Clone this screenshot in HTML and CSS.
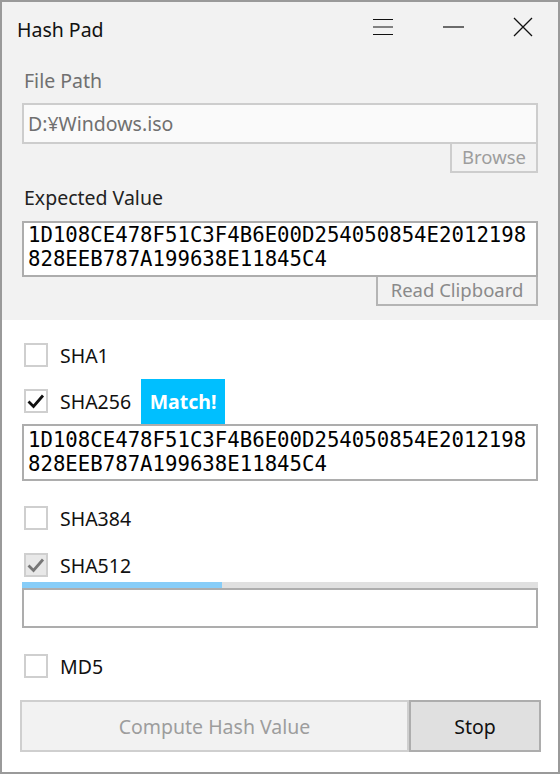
FILE: index.html
```html
<!DOCTYPE html>
<html>
<head>
<meta charset="utf-8">
<link rel="stylesheet" href="styles.css">
</head>
<body>
<div class="window">
  <header class="titlebar">
    <div class="title">Hash Pad</div>
    <div class="caption-buttons">
      <div class="cap-btn">
        <svg width="20" height="18" viewBox="0 0 20 18"><path d="M0 1.5H20M0 9H20M0 16.5H20" stroke="#111" stroke-width="1.2" fill="none"/></svg>
      </div>
      <div class="cap-btn">
        <svg width="21" height="4" viewBox="0 0 21 4"><path d="M0 2H21" stroke="#111" stroke-width="1.2" fill="none"/></svg>
      </div>
      <div class="cap-btn">
        <svg width="20" height="20" viewBox="0 0 20 20"><path d="M1 1L19 19M19 1L1 19" stroke="#111" stroke-width="1.3" fill="none"/></svg>
      </div>
    </div>
  </header>
  <section class="source">
    <div class="label muted">File Path</div>
    <div class="textbox path">D:¥Windows.iso</div>
    <div class="btn-row"><div class="small-btn browse">Browse</div></div>
    <div class="label second">Expected Value</div>
    <div class="textbox mono expected">1D108CE478F51C3F4B6E00D254050854E2012198<br>828EEB787A199638E11845C4</div>
    <div class="btn-row"><div class="small-btn clip">Read Clipboard</div></div>
  </section>
  <section class="results">
    <div class="check-row r-sha1"><span class="box"></span><span class="cb-label">SHA1</span></div>
    <div class="check-row r-sha256"><span class="box">
      <svg width="20" height="20" viewBox="0 0 20 20"><path d="M2.5 10.5L7.5 15.5L17 4.5" stroke="#111" stroke-width="2.8" fill="none"/></svg>
    </span><span class="cb-label">SHA256</span><span class="badge">Match!</span></div>
    <div class="textbox mono result">1D108CE478F51C3F4B6E00D254050854E2012198<br>828EEB787A199638E11845C4</div>
    <div class="check-row r-sha384"><span class="box"></span><span class="cb-label">SHA384</span></div>
    <div class="check-row r-sha512"><span class="box disabled">
      <svg width="20" height="20" viewBox="0 0 20 20"><path d="M2.5 10.5L7.5 15.5L17 4.5" stroke="#777" stroke-width="2.8" fill="none"/></svg>
    </span><span class="cb-label">SHA512</span></div>
    <div class="progress"><div class="fill" style="width:38.8%"></div></div>
    <div class="textbox empty"></div>
    <div class="check-row r-md5"><span class="box"></span><span class="cb-label">MD5</span></div>
    <div class="actions">
      <div class="action compute">Compute Hash Value</div>
      <div class="action stop">Stop</div>
    </div>
  </section>
</div>
</body>
</html>
```

FILE: styles.css
```css
html, body {
  margin: 0;
  padding: 0;
  background: #fff;
}
.window {
  width: 560px;
  height: 774px;
  box-sizing: border-box;
  border: 2px solid #9a9a9a;
  font-family: "Noto Sans", "Open Sans", sans-serif;
  font-size: 19.5px;
  color: #1a1a1a;
  display: flex;
  flex-direction: column;
  background: #fff;
}
.titlebar {
  height: 50px;
  display: flex;
  align-items: center;
  justify-content: space-between;
  background: #f2f2f2;
}
.title {
  padding-left: 15px;
  font-size: 19.5px;
  color: #111;
  margin-top: 4px;
}
.caption-buttons {
  display: flex;
  height: 100%;
}
.cap-btn {
  width: 70px;
  display: flex;
  align-items: center;
  justify-content: center;
}
.source {
  background: #f2f2f2;
  padding: 16px 20px 14px 20px;
  display: flex;
  flex-direction: column;
}
.label {
  padding-left: 2px;
  line-height: 26px;
  color: #222;
}
.label.muted {
  color: #707070;
}
.label.second {
  margin-top: 12px;
}
.textbox {
  box-sizing: border-box;
  border: 2px solid #adadad;
  background: #fff;
}
.path {
  margin-top: 9px;
  height: 41px;
  border-color: #cdcdcd;
  background: #fafafa;
  color: #707070;
  padding: 5px 0 0 4px;
}
.btn-row {
  display: flex;
  justify-content: flex-end;
}
.small-btn {
  box-sizing: border-box;
  height: 29px;
  border: 2px solid #cdcdcd;
  border-top: none;
  color: #9d9d9d;
  font-size: 18.5px;
  line-height: 26px;
  text-align: center;
}
.browse {
  width: 88px;
}
.clip {
  width: 162px;
  background: #f2f2f2;
  border-color: #b5b5b5;
  color: #8a8a8a;
}
.mono {
  font-family: "DejaVu Sans Mono", "Liberation Mono", monospace;
  font-size: 20.7px;
  line-height: 24px;
  color: #000;
}
.expected {
  margin-top: 10px;
  height: 56px;
  padding: 0 0 0 4px;
}
.results {
  padding: 22px 20px 0 20px;
  display: flex;
  flex-direction: column;
}
.check-row {
  display: flex;
  align-items: center;
  height: 26px;
}
.box {
  box-sizing: border-box;
  width: 24px;
  height: 24px;
  margin-left: 2px;
  border: 2px solid #cfcfcf;
  background: #fff;
  display: flex;
  align-items: center;
  justify-content: center;
}
.box.disabled {
  background: #e8e8e8;
}
.cb-label {
  margin-left: 12px;
  color: #111;
}
.r-sha256 {
  margin-top: 10px;
  height: 46px;
}
.badge {
  margin-left: 10px;
  height: 45px;
  width: 84px;
  background: #00bfff;
  color: #fff;
  font-weight: bold;
  display: flex;
  align-items: center;
  justify-content: center;
}
.result {
  height: 57px;
  padding: 2px 0 0 4px;
}
.r-sha384 {
  margin-top: 24px;
}
.r-sha512 {
  margin-top: 21px;
}
.progress {
  margin-top: 4px;
  height: 6px;
  background: #e0e0e0;
}
.fill {
  height: 100%;
  background: #87cdf8;
}
.empty {
  height: 40px;
}
.r-md5 {
  margin-top: 25px;
}
.actions {
  margin: 21px -3px 0 -2px;
  display: flex;
  height: 52px;
}
.action {
  box-sizing: border-box;
  display: flex;
  align-items: center;
  justify-content: center;
  border: 2px solid #cfcfcf;
}
.compute {
  flex: 1;
  background: #f2f2f2;
  color: #9d9d9d;
}
.stop {
  width: 132px;
  background: #e0e0e0;
  border-color: #adadad;
  color: #111;
}
```
